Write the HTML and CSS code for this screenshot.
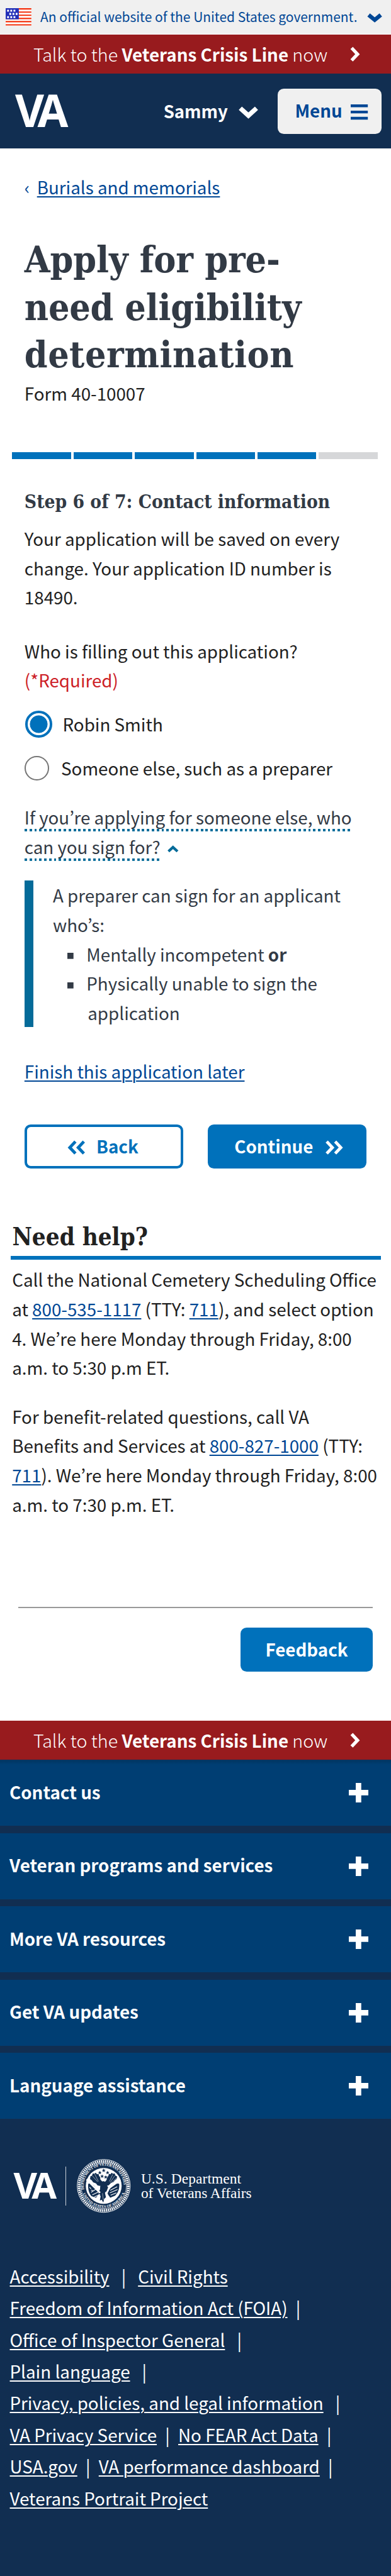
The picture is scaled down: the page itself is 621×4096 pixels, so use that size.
FILE: index.html
```
<!DOCTYPE html>
<html lang="en">
<head>
<meta charset="utf-8">
<title>Apply for pre-need eligibility determination</title>
<link rel="stylesheet" href="styles.css">
</head>
<body>
<div class="page">
  <div class="gov">
    <svg class="flag" width="42" height="29" viewBox="0 0 42 29">
      <rect width="42" height="29" fill="#fff"/>
      <path stroke="#f4300c" stroke-width="2.2" d="M0 1.2h42M0 6.4h42M0 11.6h42M0 16.8h42M0 22h42M0 27.3h42"/>
      <rect width="21.5" height="18.2" fill="#2230b8"/>
      <path stroke="#fff" stroke-width="3.1" stroke-dasharray="3 2.2" d="M2.4 4.2h14M6 9.4h14M2.4 14.6h14"/>
    </svg>
    <span class="gov-text">An official website of the United States government.</span>
    <svg class="gov-arrow" width="25" height="16" viewBox="0 0 25 16"><path fill="none" stroke="#004795" stroke-width="6.6" d="M2.6 2.8 12.5 11 22.4 2.8"/></svg>
  </div>
  <div class="crisis"><span>Talk to the <b>Veterans Crisis Line</b> now</span>
    <svg width="17" height="25" viewBox="0 0 17 25"><path fill="none" stroke="#fff" stroke-width="5.4" d="m2.6 2.3 9.6 10.2-9.6 10.2"/></svg>
  </div>
  <header class="header">
    <svg class="va" width="86" height="54" viewBox="0 0 86 54"><text class="va-text" x="0 36.5" y="53" font-size="73">VA</text></svg>
    <span class="user">Sammy</span>
    <svg class="user-arrow" width="32" height="21" viewBox="0 0 32 21"><path fill="none" stroke="#fff" stroke-width="7.6" d="M2.8 3.2 16 15.2 29.2 3.2"/></svg>
    <button class="menu">Menu
      <svg width="28" height="25" viewBox="0 0 28 25"><path stroke="#004795" stroke-width="4.6" d="M0 2.4h28M0 12.5h28M0 22.6h28"/></svg>
    </button>
  </header>

  <main class="main">
    <nav class="crumb"><span class="crumb-mark">‹</span><a href="#">Burials and memorials</a></nav>
    <h1 class="title"><span class="t1">Apply for pre-</span><br><span class="t2">need eligibility</span><br><span class="t3">determination</span></h1>
    <p class="form-no">Form 40-10007</p>
    <div class="progress"><i></i><i></i><i></i><i></i><i></i><i class="todo"></i></div>
    <h2 class="step">Step 6 of 7: Contact information</h2>
    <p class="saved">Your application will be saved on every<br>change. Your application ID number is<br>18490.</p>
    <p class="question">Who is filling out this application?<br><span class="required">(*Required)</span></p>
    <label class="radio radio-on"><span class="dot"></span>Robin Smith</label>
    <label class="radio radio-off"><span class="dot"></span>Someone else, such as a preparer</label>
    <p class="expander"><span>If you’re applying for someone else, who<br>can you sign for?</span><svg width="18" height="12" viewBox="0 0 18 12"><path fill="none" stroke="#046b99" stroke-width="4.4" d="M1.6 10 9 3.2l7.4 6.8"/></svg></p>
    <div class="info">
      <p>A preparer can sign for an applicant<br>who’s:</p>
      <ul><li>Mentally incompetent <b>or</b></li><li>Physically unable to sign the<br><span class="cont">application</span></li></ul>
    </div>
    <p class="finish"><a href="#">Finish this application later</a></p>
    <div class="buttons">
      <button class="btn back"><svg width="29" height="24" viewBox="0 0 29 24"><path fill="none" stroke="#0071bb" stroke-width="5" d="M13.2 2.2 4 12l9.2 9.8M27 2.2 17.8 12l9.2 9.8"/></svg>Back</button>
      <button class="btn next">Continue<svg width="29" height="24" viewBox="0 0 29 24"><path fill="none" stroke="#fff" stroke-width="5" d="M2 2.2 11.2 12 2 21.8M15.8 2.2 25 12l-9.2 9.8"/></svg></button>
    </div>
    <section class="help">
      <h2>Need help?</h2>
      <p>Call the National Cemetery Scheduling Office<br>at <a href="#">800-535-1117</a> (TTY: <a href="#">711</a>), and select option<br>4. We’re here Monday through Friday, 8:00<br>a.m. to 5:30 p.m ET.</p>
      <p class="second">For benefit-related questions, call VA<br>Benefits and Services at <a href="#">800-827-1000</a> (TTY:<br><a href="#">711</a>). We’re here Monday through Friday, 8:00<br>a.m. to 7:30 p.m. ET.</p>
    </section>
    <div class="feedback"><button>Feedback</button></div>
  </main>

  <footer>
    <div class="crisis"><span>Talk to the <b>Veterans Crisis Line</b> now</span>
      <svg width="17" height="25" viewBox="0 0 17 25"><path fill="none" stroke="#fff" stroke-width="5.4" d="m2.6 2.3 9.6 10.2-9.6 10.2"/></svg>
    </div>
    <div class="accordion">
      <div class="item first"><span>Contact us</span><i class="plus"></i></div>
      <div class="item"><span>Veteran programs and services</span><i class="plus"></i></div>
      <div class="item"><span>More VA resources</span><i class="plus"></i></div>
      <div class="item"><span>Get VA updates</span><i class="plus"></i></div>
      <div class="item"><span>Language assistance</span><i class="plus"></i></div>
    </div>
    <div class="brand">
      <svg class="brand-va" width="71" height="44" viewBox="0 0 86 54"><text class="va-text" x="0 36.5" y="53" font-size="73">VA</text></svg>
      <span class="brand-line"></span>
      <svg class="seal" width="88" height="88" viewBox="-132 -132 264 264">
        <defs>
          <path id="arc-top" d="M-96 18A98 98 0 1 1 96 18"/>
          <path id="arc-bottom" d="M-105 30A110 110 0 0 0 105 30"/>
        </defs>
        <circle r="130" fill="none" stroke="#fff" stroke-width="3"/>
        <circle r="120" fill="none" stroke="#fff" stroke-width="13" stroke-dasharray="6 3.5"/>
        <circle r="111" fill="none" stroke="#fff" stroke-width="2"/>
        <text class="seal-text"><textPath href="#arc-top" textLength="324" lengthAdjust="spacingAndGlyphs">DEPARTMENT OF VETERANS AFFAIRS</textPath></text>
        <text class="seal-text"><textPath href="#arc-bottom" startOffset="8" textLength="265" lengthAdjust="spacingAndGlyphs">UNITED STATES OF AMERICA</textPath></text>
        <circle r="88" fill="#fff"/>
        <g fill="#112e51">
          <path d="m0-86 3 7h7l-6 4 2 8-6-5-6 5 2-8-6-4h7zM-19-74l3 6h6l-5 4 2 7-6-4-6 4 2-7-5-4h6zM19-74l3 6h6l-5 4 2 7-6-4-6 4 2-7-5-4h6zM-8-56l3 6h6l-5 4 2 7-6-4-6 4 2-7-5-4h6zM10-52l3 6h6l-5 4 2 7-6-4-6 4 2-7-5-4h6z"/>
          <path d="M-66-46l8-4 5-12 7 3 7-6 6 8 7-2 3 10 5 6 2 12 8 9-2 16-8 6-12-2-8-10-14-6-6-9-10-7 2-4z"/>
          <path d="M66-46l-8-4-5-12-7 3-7-6-6 8-7-2-3 10-5 6-4 14-8 10-1 14 6 4 14-2 9-10 14-6 7-9 9-7z"/>
          <path d="M-16-14c8-14 26-10 28 4 8 6 3 12 10 16L14 26 6 34l5 22-9 8-4 18-8-14-9 4 4-22-13-16 10-16z"/>
          <path d="M-76-10c12-4 24 2 32 12l12 20 8 20-14 16-22-8c-14-16-18-38-16-60zM76-10C64-14 50-8 40 2L28 18 18 38l14 20 24-10C72 32 78 12 76-10z"/>
        </g>
        <g fill="none" stroke="#fff" stroke-width="3.4">
          <path stroke-width="9" d="m-84-32 66 66M82-30 24 12"/>
          <path d="m-62 32 30-20M-56 44l34-16M-46 54l28-12M32 22l34-18M30 34l38-16M34 46l28-12M-70 6l8 8M-62 20l10 4"/>
          <path stroke-width="1.7" d="m-56-50 26 30m-14-38 18 36M44-56 28-22m26-28L32-16m32-24L36-12M-6 36l4 32M8 30l14 10"/>
        </g>
      </svg>
      <span class="dept"><span class="dept-name">U.S. Department</span><br>of Veterans Affairs</span>
    </div>
    <div class="links">
      <div><a href="#">Accessibility</a><span class="sep wide">|</span><a href="#">Civil Rights</a></div>
      <div><a href="#">Freedom of Information Act (FOIA)</a><span class="sep">|</span></div>
      <div><a href="#">Office of Inspector General</a><span class="sep wide">|</span></div>
      <div><a href="#">Plain language</a><span class="sep wide">|</span></div>
      <div><a href="#">Privacy, policies, and legal information</a><span class="sep wide">|</span></div>
      <div><a href="#">VA Privacy Service</a><span class="sep">|</span><a href="#">No FEAR Act Data</a><span class="sep">|</span></div>
      <div><a href="#">USA.gov</a><span class="sep">|</span><a href="#">VA performance dashboard</a><span class="sep">|</span></div>
      <div><a href="#">Veterans Portrait Project</a></div>
    </div>
  </footer>
</div>
</body>
</html>
```
FILE: styles.css
```
* { box-sizing: border-box; }
html { background: #112e51; }
body { margin: 0; }
h1, h2, p, ul { margin: 0; padding: 0; font-weight: inherit; }
svg { display: block; flex: none; overflow: visible; }
a { color: #004795; text-decoration: underline; text-decoration-thickness: 2px; text-underline-offset: 3px; }
button { font: inherit; border: 0; margin: 0; padding: 0; display: flex; align-items: center; }

.page {
  zoom: 0.971;
  width: 639.6px;
  height: 4218px;
  background: #112e51;
  color: #212121;
  font: 400 28.58px/48px "Noto Sans CJK KR", "Noto Sans", sans-serif;
  white-space: nowrap;
}

/* top bars */
.gov { display: flex; height: 57px; padding: 13px 0 0 9.5px; background: #f0f0f0; border-bottom: 1px solid #fff; color: #004795; }
.gov-text { margin-left: 14.5px; font-size: 21.6px; line-height: 28.6px; }
.gov-arrow { margin: 8.5px 0 0 15.5px; }
.crisis { display: flex; align-items: center; height: 64px; padding: 0 0 0.5px 54.5px; background: #981b1e; color: #fff; font-size: 29.5px; font-weight: 300; }
.crisis span { width: 518.2px; }
.crisis b { font-size: 28.6px; font-weight: 700; }
.header { display: flex; align-items: center; height: 122px; background: #112e51; color: #fff; font-weight: 700; }
.va { margin-left: 24.5px; }
.va-text { font-family: "Open Sans", sans-serif; font-weight: 700; fill: #fff; }
.user { width: 123px; margin: -1px 0 0 157px; font-size: 28.3px; }
.user-arrow { margin-top: 6px; }
.menu { width: 170px; height: 74px; margin-left: 32px; padding: 0 0 2px 28px; background: #f0f0f0; border-radius: 10px; color: #004795; font-weight: 700; }
.menu svg { margin: 4px 0 0 13.5px; }

/* form */
.main { height: 2575px; padding: 38.8px 40px 0; background: #fff; }
.crumb { display: flex; }
.crumb-mark { width: 20.5px; color: #004795; }
.title { margin-top: 56.4px; color: #323a45; font: 700 60.3px/78px "DejaVu Serif Condensed", "DejaVu Serif", serif; font-stretch: condensed; }
.t1 { letter-spacing: -0.1px; }
.t2 { letter-spacing: -0.2px; }
.t3 { letter-spacing: 0.5px; }
.form-no { margin-top: -0.6px; }
.progress { display: flex; gap: 4.2px; height: 12px; margin: 72.4px -18px 0 -20px; }
.progress i { flex: 1; background: #0071bb; }
.progress .todo { background: #d6d7d9; }
.step { margin-top: 50px; color: #323a45; font: 700 30.6px/40px "DejaVu Serif Condensed", "DejaVu Serif", serif; font-stretch: condensed; }
.saved { margin-top: 16px; }
.question { margin-top: 39.8px; }
.required { color: #cd2026; }
.radio { display: flex; align-items: center; }
.dot { flex: none; border-radius: 50%; }
.radio-on { height: 44px; margin: 26.2px 0 0 1px; }
.radio-on .dot { width: 44px; height: 44px; margin-right: 17.5px; border: 4.2px solid #0071bb; background: radial-gradient(circle, #0071bb 14px, #fff 14.8px); }
.radio-off { height: 40px; margin-top: 29.7px; }
.radio-off .dot { width: 40px; height: 40px; margin-right: 20px; border: 2.1px solid #757575; }
.expander { margin-top: 36.6px; color: #323a45; }
.expander span { padding-bottom: 3px; background: repeating-linear-gradient(90deg, #046b99 0 4px, transparent 4px 8px) 0 100% / 100% 4px no-repeat; -webkit-box-decoration-break: clone; box-decoration-break: clone; }
.expander svg { display: inline-block; margin-left: 12px; vertical-align: 2px; }
.info { height: 240px; margin-top: 32px; padding-left: 32px; border-left: 14.5px solid #046b99; color: #323a45; }
.info ul { list-style: none; padding-left: 24px; }
.info li { padding-left: 31px; background: linear-gradient(#323a45, #323a45) 0 22px / 10px 10px no-repeat; }
.cont { margin-left: 2px; }
.finish { margin-top: 47.5px; }
.buttons { display: flex; gap: 40px; margin-top: 64px; }
.btn { width: 260px; height: 72px; border-radius: 10px; font-weight: 700; padding-bottom: 1px; }
.back { padding-left: 66px; gap: 18.5px; border: 4.2px solid #0071bb; background: #fff; color: #0071bb; }
.next { padding-left: 43.5px; gap: 20px; background: #0071bb; color: #fff; }
.btn svg { margin-top: 3px; }

/* help */
.help { margin: 87.6px -23px 0; }
.help h2 { padding: 0 0 5.4px 3px; border-bottom: 6.2px solid #0071bb; font: 700 39.4px/50px "DejaVu Serif Condensed", "DejaVu Serif", serif; font-stretch: condensed; }
.help p { margin-top: 8.7px; padding-left: 2.8px; }
.help .second { margin-top: 31.8px; }
.feedback { display: flex; justify-content: flex-end; margin: 144.2px -10px 0; padding-top: 32px; border-top: 2.1px solid #999; }
.feedback button { width: 216px; height: 72px; justify-content: center; padding-bottom: 1px; border-radius: 10px; background: #0071bb; color: #fff; font-weight: 700; }

/* footer */
.accordion { display: grid; gap: 12px; color: #fff; font-weight: 700; }
.item { display: flex; align-items: center; justify-content: space-between; height: 108px; padding: 0 37.5px 0 15.5px; background: #003e73; }
.first { background: linear-gradient(#00345f, #003e73 8px); }
.item span { margin-top: -3.5px; }
.plus { width: 32px; height: 32px; background: linear-gradient(#fff, #fff) 50% 50% / 32px 9px no-repeat, linear-gradient(#fff, #fff) 50% 50% / 9px 32px no-repeat; }
.brand { display: flex; align-items: center; height: 88px; margin-top: 66px; color: #fff; }
.brand-va { margin: -2px 0 0 21.5px; }
.brand-line { width: 1.1px; height: 63px; margin-left: 14.5px; background: #c9d0d8; }
.seal { margin-left: 18px; }
.seal-text { font: 700 18px "Liberation Serif", serif; fill: #fff; }
.dept { margin: 0 0 0 16.5px; font: 400 24.1px/24px "Liberation Serif", serif; }
.dept-name { letter-spacing: 0.1px; }
.links { margin: 77px 0 0 16px; color: #fff; line-height: 52px; }
.links a { color: #fff; }
.sep { display: inline-block; width: 35px; text-align: center; }
.sep.wide { width: 47px; }
```
